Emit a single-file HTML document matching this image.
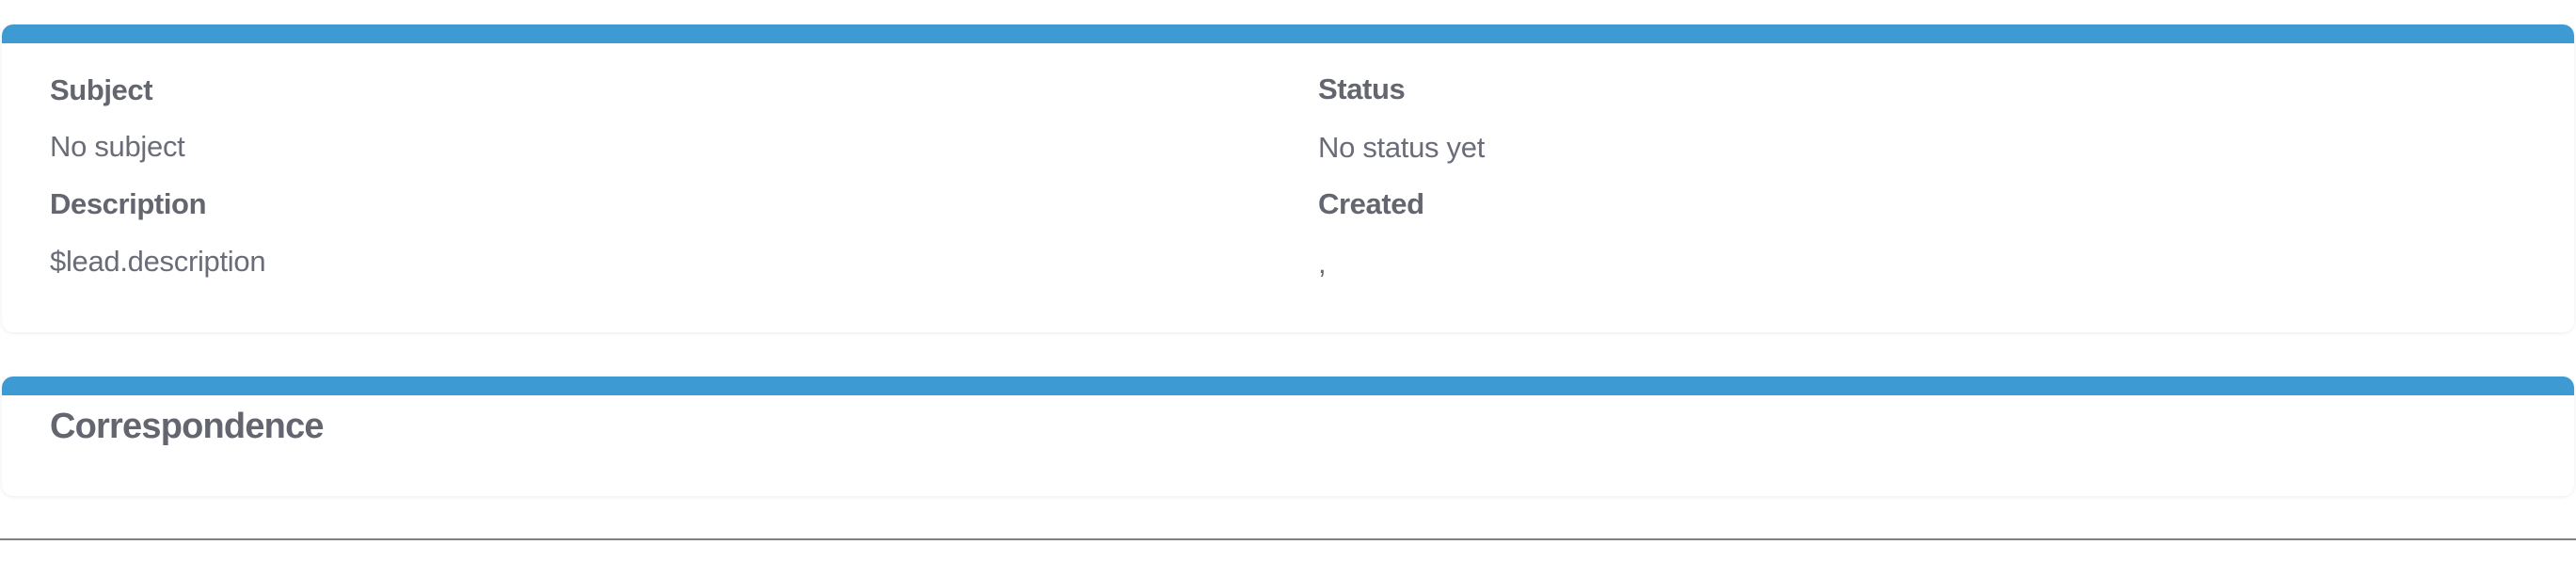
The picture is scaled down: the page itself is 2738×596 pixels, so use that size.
<!DOCTYPE html>
<html><head><meta charset="utf-8"><style>
html,body{margin:0;padding:0;background:#fff;width:2738px;height:596px;overflow:hidden;font-family:"Liberation Sans",Arial,sans-serif;color:#63656f}
.card{position:absolute;left:2px;width:2734px;background:#fff;border-radius:12px;box-shadow:0 1px 4px rgba(0,0,0,0.08);overflow:hidden}
.bar{position:absolute;left:0;top:0;right:0;height:20px;background:#3e9ad3}
.t{position:absolute;white-space:nowrap;line-height:1}
.b{font-weight:bold;font-size:31px;letter-spacing:-0.4px}
.r{font-size:31px;color:#6a6c78;letter-spacing:-0.3px}
</style></head><body>
<div class="card" style="top:26px;height:327px"><div class="bar"></div></div>
<div class="card" style="top:400px;height:127px"><div class="bar"></div></div>
<div class="t b" style="left:53px;top:80px">Subject</div>
<div class="t r" style="left:53px;top:140px">No subject</div>
<div class="t b" style="left:53px;top:201px">Description</div>
<div class="t r" style="left:53px;top:262px">$lead.description</div>
<div class="t b" style="left:1401px;top:79px">Status</div>
<div class="t r" style="left:1401px;top:141px">No status yet</div>
<div class="t b" style="left:1401px;top:201px">Created</div>
<div class="t r" style="left:1401px;top:264px">,</div>
<div class="t" style="left:53px;top:434px;font-size:38px;font-weight:bold;letter-spacing:-0.8px">Correspondence</div>
<div style="position:absolute;left:0;top:572px;width:2738px;height:2px;background:#808080"></div>
</body></html>
